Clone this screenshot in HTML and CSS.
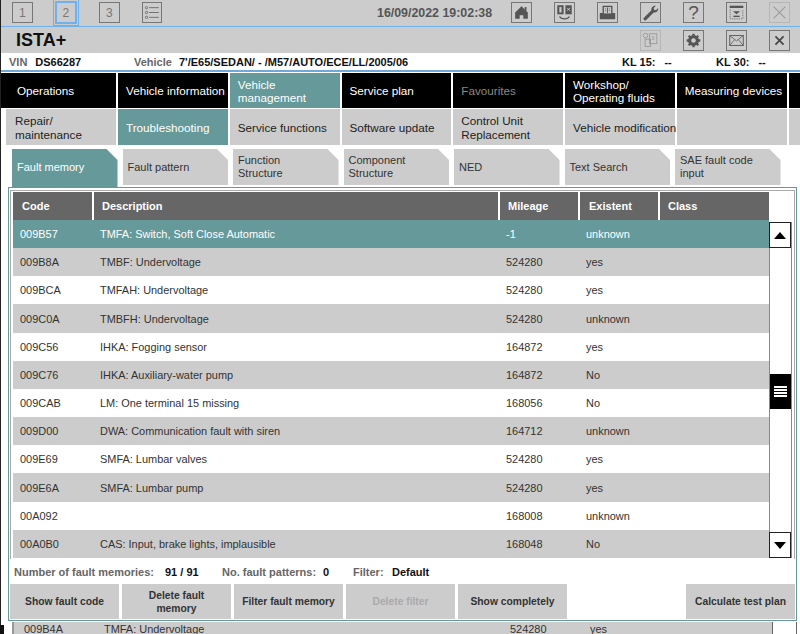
FILE: index.html
```html
<!DOCTYPE html>
<html lang="en">
<head>
    <meta charset="UTF-8">
    <title>ISTA+</title>
    <link rel="stylesheet" href="styles.css">
</head>
<body>
    <div class="topbar">
        <div class="steps">
            <div class="icon-btn step">1</div>
            <div class="icon-btn step active">2</div>
            <div class="icon-btn step">3</div>
            <div class="icon-btn">
                <svg viewBox="0 0 21 21"><g fill="none" stroke="#666" stroke-width="1"><circle cx="4" cy="5" r="1.3"/><circle cx="4" cy="10.5" r="1.3"/><circle cx="4" cy="16" r="1.3"/><path d="M7 5h11M7 10.5h11M7 16h11"/></g></svg>
            </div>
        </div>
        <div class="clock">16/09/2022 19:02:38</div>
        <div class="icons">
            <div class="icon-btn">
                <svg viewBox="0 0 21 21"><path fill="#555" d="M10.5 3.5 3.5 10.5v7h5v-4h4v4h5v-7z"/><rect x="14" y="4.5" width="2" height="4" fill="#555"/></svg>
            </div>
            <div class="icon-btn">
                <svg viewBox="0 0 21 21"><rect x="2.5" y="2.5" width="7" height="10" fill="#555"/><rect x="4.8" y="4.5" width="2.4" height="6" fill="#ccc"/><rect x="11.5" y="2.5" width="7" height="10" fill="#555"/><path d="M13.5 5.5l3 3M16.5 5.5l-3 3" stroke="#ccc"/><path d="M5 15c2 3.5 9 3.5 11 0" fill="none" stroke="#555" stroke-width="1.3"/></svg>
            </div>
            <div class="icon-btn">
                <svg viewBox="0 0 21 21"><path fill="#555" d="M5 3h11v8h3v7H2v-7h3z"/><rect x="6.5" y="4.5" width="8" height="7" fill="#ccc"/><path d="M10.5 5v6" stroke="#555"/><path d="M8 6.5h1M8 8.5h1M12 6.5h1M12 8.5h1" stroke="#555"/></svg>
            </div>
            <div class="icon-btn">
                <svg viewBox="0 0 21 21"><path fill="#555" d="M3 16.5 11.5 8c-.6-2.5 1.5-5.5 5-5l-2.500 2.500.5 2 2 .5L19 5.500c.4 3.500-2.500 5.500-5 5L5.500 19c-1.500 1-3.500-1-2.500-2.500z"/></svg>
            </div>
            <div class="icon-btn glyph">?</div>
            <div class="icon-btn">
                <svg viewBox="0 0 21 21"><rect x="3" y="3" width="15" height="2.5" fill="#555"/><path d="M3.5 7v10.500h14V7" fill="none" stroke="#777" stroke-dasharray="1.5 1"/><path d="M6.5 9h8l-4 3.5z" fill="#555"/><rect x="7" y="14" width="7" height="1.5" fill="#555"/></svg>
            </div>
            <div class="icon-btn faded">
                <svg viewBox="0 0 21 21"><path d="M4 4l13 13M17 4 4 17" stroke="#999" stroke-width="1.2"/></svg>
            </div>
        </div>
    </div>

    <div class="titlebar">
        <div class="app-name">ISTA+</div>
        <div class="icons">
            <div class="icon-btn faded">
                <svg viewBox="0 0 21 21"><g fill="none" stroke="#999"><circle cx="5" cy="5" r="2.5"/><rect x="9.5" y="3" width="8" height="11"/><rect x="4.5" y="9" width="6" height="8"/><path d="M12 6.5h3M12 9h3"/></g></svg>
            </div>
            <div class="icon-btn">
                <svg viewBox="0 0 21 21"><circle cx="10.5" cy="10.5" r="4.5" fill="none" stroke="#555" stroke-width="3"/><path d="M10.5 3v15M3 10.5h15M5.2 5.2l10.600 10.600M15.800 5.200 5.200 15.800" stroke="#555" stroke-width="2.5"/><circle cx="10.5" cy="10.5" r="2.5" fill="#ccc"/></svg>
            </div>
            <div class="icon-btn">
                <svg viewBox="0 0 21 21"><rect x="3" y="5" width="15" height="11" fill="none" stroke="#666" stroke-width="1.2"/><path d="M3 5l7.500 6L18 5M3 16l5.500-6.500M18 16l-5.500-6.500" fill="none" stroke="#666"/></svg>
            </div>
            <div class="icon-btn">
                <svg viewBox="0 0 21 21"><path d="M6 6l9 9M15 6l-9 9" stroke="#444" stroke-width="1.8"/></svg>
            </div>
        </div>
    </div>

    <div class="infobar">
        <span class="info-vin"><b class="key">VIN</b><b>DS66287</b></span>
        <span class="info-vehicle"><b class="key">Vehicle</b><b>7'/E65/SEDAN/ - /M57/AUTO/ECE/LL/2005/06</b></span>
        <span class="info-kl"><b>KL 15:</b><b>--</b></span>
        <span class="info-kl"><b>KL 30:</b><b>--</b></span>
    </div>

    <div class="nav main-nav">
        <div class="nav-item first">Operations</div>
        <div class="nav-item">Vehicle information</div>
        <div class="nav-item active">Vehicle<br>management</div>
        <div class="nav-item">Service plan</div>
        <div class="nav-item muted">Favourites</div>
        <div class="nav-item">Workshop/<br>Operating fluids</div>
        <div class="nav-item">Measuring devices</div>
        <div class="nav-item"></div>
    </div>

    <div class="nav sub-nav">
        <div class="nav-item">Repair/<br>maintenance</div>
        <div class="nav-item active">Troubleshooting</div>
        <div class="nav-item">Service functions</div>
        <div class="nav-item">Software update</div>
        <div class="nav-item">Control Unit<br>Replacement</div>
        <div class="nav-item">Vehicle modification</div>
        <div class="nav-item"></div>
        <div class="nav-item"></div>
    </div>

    <div class="tabs">
        <div class="tab active">Fault memory</div>
        <div class="tab">Fault pattern</div>
        <div class="tab">Function<br>Structure</div>
        <div class="tab">Component<br>Structure</div>
        <div class="tab">NED</div>
        <div class="tab">Text Search</div>
        <div class="tab">SAE fault code<br>input</div>
    </div>

    <div class="panel">
        <div class="frame">
            <div class="table-head">
                <div class="col-code">Code</div>
                <div>Description</div>
                <div>Mileage</div>
                <div class="col-existent">Existent</div>
                <div>Class</div>
            </div>
            <div class="table-body">
                <div class="rows">
                    <div class="row selected"><span>009B57</span><span>TMFA: Switch, Soft Close Automatic</span><span>-1</span><span>unknown</span></div>
                    <div class="row gray"><span>009B8A</span><span>TMBF: Undervoltage</span><span>524280</span><span>yes</span></div>
                    <div class="row"><span>009BCA</span><span>TMFAH: Undervoltage</span><span>524280</span><span>yes</span></div>
                    <div class="row gray"><span>009C0A</span><span>TMBFH: Undervoltage</span><span>524280</span><span>unknown</span></div>
                    <div class="row"><span>009C56</span><span>IHKA: Fogging sensor</span><span>164872</span><span>yes</span></div>
                    <div class="row gray"><span>009C76</span><span>IHKA: Auxiliary-water pump</span><span>164872</span><span>No</span></div>
                    <div class="row"><span>009CAB</span><span>LM: One terminal 15 missing</span><span>168056</span><span>No</span></div>
                    <div class="row gray"><span>009D00</span><span>DWA: Communication fault with siren</span><span>164712</span><span>unknown</span></div>
                    <div class="row"><span>009E69</span><span>SMFA: Lumbar valves</span><span>524280</span><span>yes</span></div>
                    <div class="row gray"><span>009E6A</span><span>SMFA: Lumbar pump</span><span>524280</span><span>yes</span></div>
                    <div class="row"><span>00A092</span><span></span><span>168008</span><span>unknown</span></div>
                    <div class="row gray"><span>00A0B0</span><span>CAS: Input, brake lights, implausible</span><span>168048</span><span>No</span></div>
                </div>
                <div class="scrollbar">
                    <div class="scroll-btn"><svg viewBox="0 0 12 7"><path d="M6 0l6 7H0z"/></svg></div>
                    <div class="track">
                        <div class="thumb"><i></i><i></i><i></i><i></i></div>
                    </div>
                    <div class="scroll-btn"><svg viewBox="0 0 12 7"><path d="M0 0h12L6 7z"/></svg></div>
                </div>
            </div>
        </div>

        <div class="status">
            <b class="key s-count">Number of fault memories:</b><b class="s-total">91 / 91</b>
            <b class="key s-patterns">No. fault patterns:</b><b class="s-zero">0</b>
            <b class="key s-filter">Filter:</b><b>Default</b>
        </div>

        <div class="actions">
            <div class="action">Show fault code</div>
            <div class="action">Delete fault<br>memory</div>
            <div class="action">Filter fault memory</div>
            <div class="action disabled">Delete filter</div>
            <div class="action">Show completely</div>
            <div class="action last">Calculate test plan</div>
        </div>
    </div>

    <div class="behind">
        <div class="behind-row"><span>009B4A</span><span>TMFA: Undervoltage</span><span>524280</span><span>yes</span></div>
        <div class="behind-scroll"></div>
    </div>
    <div class="corner"></div>
</body>
</html>
```

FILE: styles.css
```css
* {
    box-sizing: border-box;
}

body {
    font-family: "Liberation Sans", Arial, sans-serif;
    background-color: white;
    margin: 0;
    padding: 0;
    height: 634px;
    overflow: hidden;
    color: #222;
    border-left: 1px solid #222;
}

.key {
    color: #666;
}

/* top bars */
.topbar {
    height: 27px;
    margin-left: -1px;
    background-color: #ccc;
    border-bottom: 1px solid #6fb1ee;
    display: flex;
    align-items: center;
    padding: 0 10px 1px 12px;
}

.titlebar {
    height: 26px;
    margin-left: -1px;
    background-color: #ccc;
    display: flex;
    align-items: center;
    justify-content: space-between;
    padding: 1px 10px 0 16px;
}

.steps {
    display: flex;
    width: 150px;
    gap: 22px;
}

.clock {
    margin-left: 215px;
    width: 134px;
    font-size: 12.4px;
    font-weight: bold;
    color: #555;
}

.icons {
    display: flex;
    gap: 22px;
}

.icon-btn {
    width: 21px;
    height: 21px;
    border: 1px solid #777;
    display: flex;
    align-items: center;
    justify-content: center;
    color: #777;
    font-size: 12px;
}

.icon-btn svg {
    width: 100%;
    height: 100%;
    flex: none;
}

.icon-btn.glyph {
    font-size: 19px;
    color: #555;
}

.icon-btn.faded {
    border-color: #b5b5b5;
}

.icon-btn.active {
    margin: 0 1px;
    outline: 1px solid #6fb1ee;
    outline-offset: 2px;
    border: 1px solid #6fb1ee;
    box-shadow: 0 0 0 1px #6fb1ee;
}

.app-name {
    font-size: 18px;
    font-weight: bold;
    color: #111;
}

.infobar {
    height: 19px;
    font-size: 11px;
    display: flex;
    align-items: center;
    border-bottom: 2px solid #6fa8dc;
    padding-left: 8px;
    color: #111;
}

.infobar span {
    flex: none;
}

.info-vin {
    width: 125px;
}

.info-vin .key {
    margin-right: 8px;
}

.info-vehicle {
    width: 488px;
}

.info-vehicle .key {
    margin-right: 7px;
}

.info-kl {
    width: 94px;
}

.info-kl b:first-child {
    margin-right: 9px;
}

/* navigation */
.nav {
    display: grid;
    grid-template-columns: 115px repeat(6, 109.75px) 1fr;
    column-gap: 2px;
}

.nav-item {
    font-size: 11.7px;
    line-height: 13.5px;
    display: flex;
    align-items: center;
    padding: 1px 0 0 8px;
    white-space: nowrap;
}

.main-nav {
    height: 36px;
    margin-top: 1px;
    border-bottom: 1px solid white;
}

.main-nav .nav-item {
    background-color: black;
    color: white;
}

.main-nav .nav-item.first {
    padding-left: 16px;
}

.main-nav .nav-item.active {
    background-color: #669999;
}

.main-nav .nav-item.muted {
    color: #888;
}

.sub-nav {
    height: 36px;
    margin-left: 5px;
    grid-template-columns: 110px repeat(6, 109.75px) 1fr;
}

.sub-nav .nav-item {
    background-color: #ccc;
    color: #222;
}

.sub-nav .nav-item:first-child {
    padding-left: 9px;
}

.sub-nav .nav-item.active {
    background-color: #669999;
    color: white;
}

/* tabs */
.tabs {
    display: flex;
    gap: 5px;
    margin: 4px 0 0 11px;
    height: 38px;
    align-items: flex-start;
}

.tab {
    width: 105.5px;
    height: 36px;
    background-color: #ccc;
    clip-path: polygon(0 0, calc(100% - 11px) 0, 100% 11px, 100% 100%, 0 100%);
    font-size: 11px;
    line-height: 13px;
    padding-left: 5px;
    display: flex;
    align-items: center;
    white-space: nowrap;
    color: #333;
}

.tab.active {
    height: 38px;
    background-color: #669999;
    color: white;
    padding-bottom: 2px;
}

/* main panel */
.panel {
    width: 789px;
    height: 434px;
    margin-left: 7px;
    border: 1px solid #669999;
    padding: 2px 1px 0;
}

.frame {
    border: 1px solid #aaa;
    border-bottom: none;
    padding: 1px 2px 0;
}

.table-head {
    display: grid;
    grid-template-columns: 79px 404px 78px 78px 109px;
    column-gap: 2px;
    height: 28px;
    font-size: 11px;
    font-weight: bold;
    color: white;
}

.table-head div {
    background-color: #666;
    display: flex;
    align-items: center;
    padding-left: 8px;
}

.table-head .col-code,
.table-head .col-existent {
    padding-left: 9px;
}

.table-body {
    display: flex;
    height: 339px;
    padding-bottom: 1px;
}

.rows {
    width: 756px;
    display: grid;
    grid-template-rows: repeat(12, 1fr);
}

.row {
    display: grid;
    grid-template-columns: 80px 406px 80px 1fr;
    align-items: center;
    font-size: 10.95px;
    padding-left: 7px;
    background-color: white;
    color: #333;
}

.row.gray {
    background-color: #ccc;
}

.row.selected {
    background-color: #669999;
    color: white;
}

.scrollbar {
    width: 23px;
    margin-top: 2px;
    display: flex;
    flex-direction: column;
    border-left: 1px solid #888;
    border-right: 1px solid #888;
}

.scroll-btn {
    height: 26px;
    background-color: white;
    border: 1px solid #222;
    margin-left: -1px;
    display: flex;
    align-items: center;
    justify-content: center;
}

.scroll-btn svg {
    width: 12px;
    height: 7px;
}

.track {
    flex: 1;
}

.thumb {
    width: 21px;
    height: 35px;
    margin-top: 126px;
    background-color: black;
    display: flex;
    flex-direction: column;
    align-items: center;
    justify-content: center;
    gap: 1.5px;
}

.thumb i {
    display: block;
    width: 13px;
    height: 1.5px;
    background-color: white;
}

.status {
    font-size: 11px;
    height: 25px;
    display: flex;
    align-items: center;
    padding-left: 4px;
    color: #111;
}

.s-count {
    width: 151px;
}

.s-total {
    width: 57px;
}

.s-patterns {
    width: 101px;
}

.s-zero {
    width: 30px;
}

.s-filter {
    width: 39px;
}

.actions {
    display: flex;
    gap: 3px;
    height: 35px;
}

.action {
    width: 109px;
    background-color: #ccc;
    font-size: 10.3px;
    font-weight: bold;
    line-height: 13px;
    color: #333;
    display: flex;
    align-items: center;
    justify-content: center;
    text-align: center;
}

.action.disabled {
    color: #aaa;
}

.action.last {
    margin-left: auto;
}

/* row of the window behind the panel */
.behind {
    margin: 1px 0 0 11px;
    height: 14px;
    display: flex;
}

.behind-row {
    width: 761px;
    border-left: 2px solid #999;
    border-right: 1px solid #666;
    background-color: #ccc;
    display: grid;
    grid-template-columns: 80px 406px 80px 1fr;
    align-items: center;
    font-size: 10.95px;
    padding-left: 10px;
    color: #333;
}

.behind-scroll {
    width: 24px;
    border-right: 1px solid #666;
}

.corner {
    position: absolute;
    left: 0;
    top: 625px;
    width: 4px;
    height: 9px;
    background-color: #111;
}
```
